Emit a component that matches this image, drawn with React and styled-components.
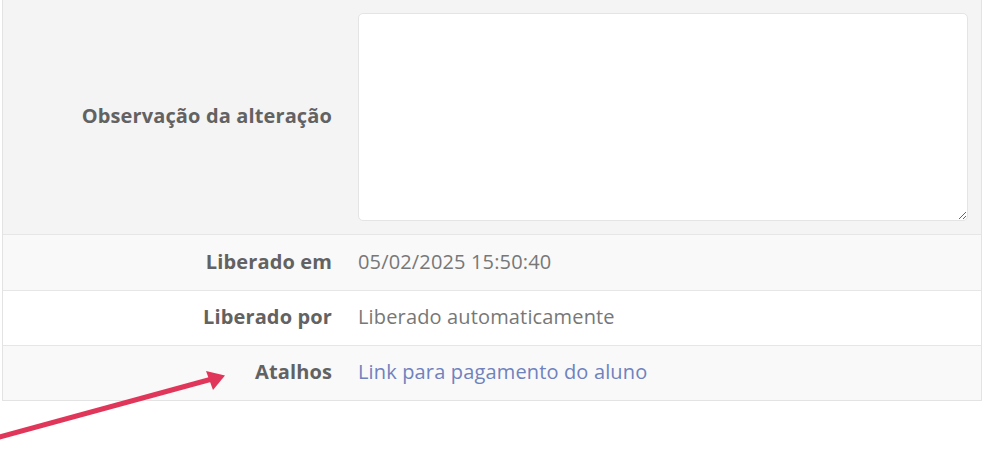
import React from 'react'
import styled, { createGlobalStyle } from 'styled-components'

const GlobalStyle = createGlobalStyle`
  html, body {
    margin: 0;
    padding: 0;
    background: #fff;
    font-family: "Open Sans", "Liberation Sans", sans-serif;
  }
`

const Page = styled.div`
  position: relative;
  width: 998px;
  height: 453px;
  overflow: hidden;
  padding-left: 2px;
  box-sizing: border-box;
`

const Tabela = styled.div`
  width: 980px;
  margin-top: -1px;
  border: 1px solid #e3e3e3;
  box-sizing: border-box;
`

const Linha = styled.div`
  display: grid;
  grid-template-columns: 342px 1fr;
  align-items: center;
  min-height: ${p => p.$altura}px;
  background: ${p => p.$fundo};
  border-top: 1px solid #e6e6e6;
  &:first-child {
    border-top: none;
  }
`

const Rotulo = styled.div`
  text-align: right;
  padding: 0 13px 3px 0;
  font-size: 20px;
  font-weight: 700;
  letter-spacing: 0.13px;
  color: #626262;
`

const Valor = styled.div`
  padding: 0 13px 3px;
  font-size: 20px;
  letter-spacing: 0.15px;
  color: #777;
`

const Link = styled.a`
  color: #6f82be;
  text-decoration: none;
  cursor: pointer;
`

const CaixaTexto = styled.textarea`
  display: block;
  width: 100%;
  height: 208px;
  margin: 13px 0 10px;
  box-sizing: border-box;
  background: #fff;
  border: 1px solid #e4e4e4;
  border-radius: 5px;
  outline: none;
  resize: vertical;
  font-family: inherit;
  font-size: 16px;
  color: #555;
`

const Seta = styled.svg`
  position: absolute;
  left: 0;
  top: 0;
  pointer-events: none;
`

export default function App() {
  return (
    <Page>
      <GlobalStyle />
      <Tabela>
        <Linha $altura={234} $fundo="#f4f4f4">
          <Rotulo>Observação da alteração</Rotulo>
          <Valor>
            <CaixaTexto />
          </Valor>
        </Linha>
        <Linha $altura={55} $fundo="#f9f9f9">
          <Rotulo>Liberado em</Rotulo>
          <Valor>05/02/2025 15:50:40</Valor>
        </Linha>
        <Linha $altura={54} $fundo="#fff">
          <Rotulo>Liberado por</Rotulo>
          <Valor>Liberado automaticamente</Valor>
        </Linha>
        <Linha $altura={54} $fundo="#f9f9f9">
          <Rotulo>Atalhos</Rotulo>
          <Valor><Link>Link para pagamento do aluno</Link></Valor>
        </Linha>
      </Tabela>
      <Seta width="998" height="453" viewBox="0 0 998 453">
        <line x1="-4" y1="438" x2="212" y2="379" stroke="#e0365a" strokeWidth="5" />
        <polygon points="225,375.5 206,371 213,390" fill="#e0365a" />
      </Seta>
    </Page>
  )
}
